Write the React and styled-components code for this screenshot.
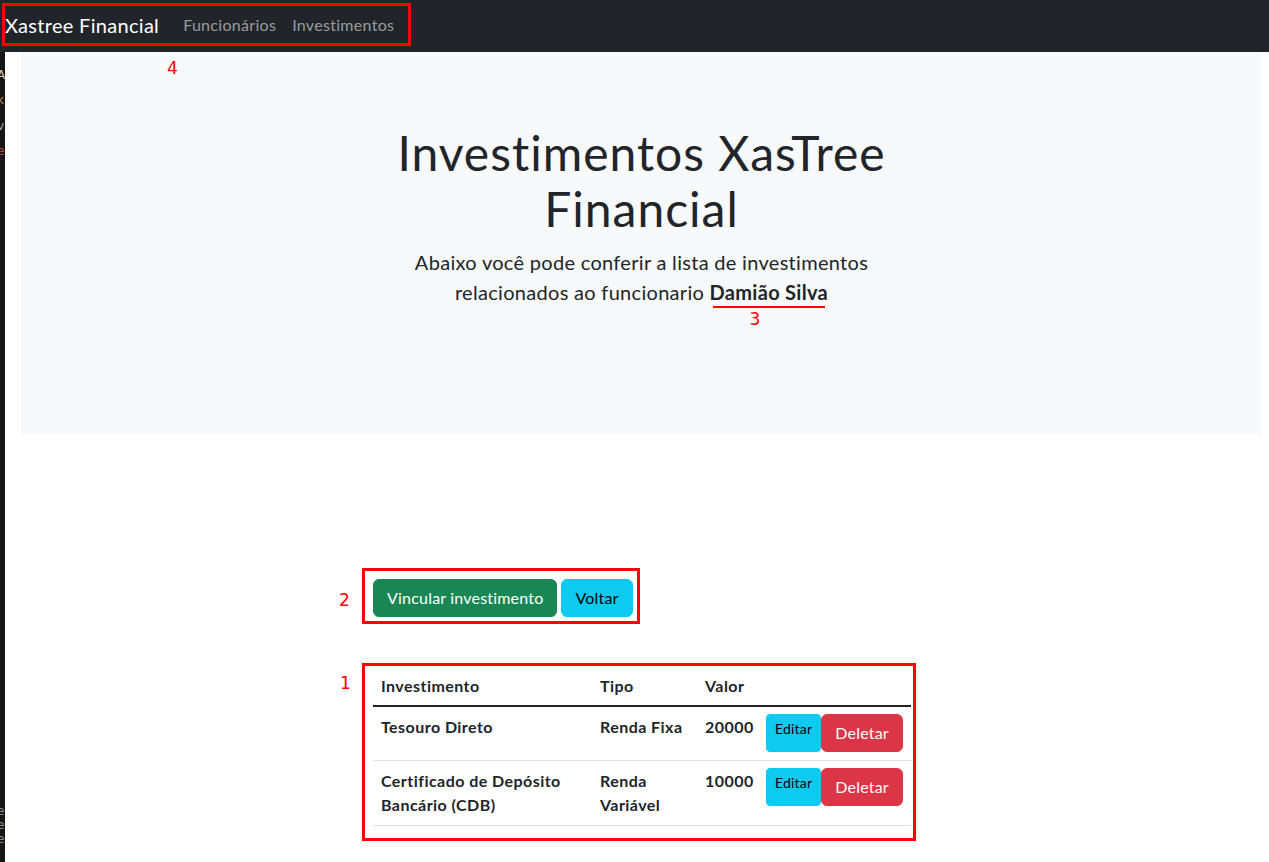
import styled, { createGlobalStyle } from 'styled-components';

const GlobalStyle = createGlobalStyle`
    * {
        box-sizing: border-box;
    }
    body {
        margin: 0;
        background: #ffffff;
        color: #212529;
        font-family: Lato, "Noto Sans", sans-serif;
        font-size: 16px;
        letter-spacing: 0.3px;
    }
`;

const Page = styled.div`
    width: 1269px;
    height: 862px;
    display: flex;
    flex-direction: column;
    overflow: hidden;
`;

const Navbar = styled.nav`
    height: 52px;
    flex-shrink: 0;
    background: #212529;
    display: flex;
    align-items: flex-start;
    padding: 3px 0 0 2px;
`;

const Annotated = styled.div`
    position: relative;
    display: ${(p) => (p.$block ? 'block' : 'inline-flex')};
    align-items: center;
    border: 3px solid #ff0000;
`;

const NavBox = styled(Annotated)`
    height: 43px;
    padding: 0 6px 0 0;
`;

const Brand = styled.span`
    color: #ffffff;
    font-size: 20px;
    margin-right: 16px;
`;

const NavLink = styled.span`
    color: rgba(255, 255, 255, 0.55);
    font-size: 16px;
    padding: 0 8px;
`;

const Marker = styled.span`
    position: absolute;
    top: ${(p) => p.$top};
    left: ${(p) => p.$left};
    color: #ff0000;
    font-family: "DejaVu Sans", sans-serif;
    font-size: 17px;
    font-weight: 400;
    line-height: 22px;
    letter-spacing: 0;
`;

const Body = styled.div`
    flex: 1;
    display: flex;
`;

const Strip = styled.div`
    width: 5px;
    flex-shrink: 0;
    background: #161616;
    overflow: hidden;
    display: flex;
    flex-direction: column;
    font-family: "DejaVu Sans", sans-serif;
    font-size: 12px;
    line-height: 14px;
`;

const Snip = styled.span`
    display: block;
    margin-top: ${(p) => p.$gap};
    margin-left: -3px;
    color: ${(p) => p.$color};
`;

const Main = styled.main`
    flex: 1;
    display: flex;
    flex-direction: column;
`;

const Hero = styled.section`
    height: 383px;
    margin: 0 7px 0 16px;
    background: #f8f9fa;
    padding-top: 73px;
    display: flex;
    justify-content: center;
`;

const HeroInner = styled.div`
    width: 560px;
    text-align: center;
`;

const Title = styled.h1`
    margin: 0;
    font-size: 48px;
    font-weight: 400;
    line-height: 56px;
    letter-spacing: 1px;
`;

const Lead = styled.p`
    margin: 10px 0 0;
    font-size: 20px;
    line-height: 30px;
`;

const Name = styled.strong`
    position: relative;
    font-weight: 700;
`;

const Underline = styled.span`
    position: absolute;
    left: 3px;
    right: 3px;
    bottom: -4px;
    height: 2px;
    background: #ff0000;
`;

const Column = styled.div`
    margin: 133px 0 0 357px;
    display: flex;
    flex-direction: column;
    align-items: flex-start;
`;

const ButtonBox = styled(Annotated)`
    padding: 8px 4px 4px 8px;
    gap: 4px;
`;

const Button = styled.button`
    font-family: inherit;
    letter-spacing: 0.2px;
    font-size: ${(p) => (p.$small ? '14px' : '16px')};
    line-height: ${(p) => (p.$small ? '21px' : '24px')};
    padding: ${(p) => (p.$small ? '3px 8px 4px' : '6px 13px 6px')};
    border: 1px solid ${(p) => p.$bg};
    border-radius: ${(p) => (p.$small ? '4px' : '6px')};
    background: ${(p) => p.$bg};
    color: ${(p) => p.$fg};
    align-self: stretch;
    display: flex;
    align-items: flex-start;
    cursor: pointer;
`;

const TableBox = styled(Annotated)`
    display: block;
    margin-top: 39px;
    padding: 0 2px 12px 8px;
`;

const Table = styled.table`
    width: 538px;
    table-layout: fixed;
    border-collapse: collapse;
    font-size: 16px;
    line-height: 24px;
    letter-spacing: 0.45px;
`;

const Th = styled.th`
    width: ${(p) => p.$w};
    text-align: left;
    font-weight: 700;
    padding: 8px 8px 7px;
    border-bottom: 2px solid #212529;
`;

const Td = styled.td`
    vertical-align: top;
    font-weight: 700;
    padding: 8px 8px 8px;
    border-bottom: 1px solid #dee2e6;
`;

const Actions = styled.div`
    display: flex;
    align-items: stretch;
    margin-top: -1px;
`;

const rows = [
    { name: 'Tesouro Direto', tipo: 'Renda Fixa', valor: 20000 },
    { name: 'Certificado de Depósito Bancário (CDB)', tipo: 'Renda Variável', valor: 10000 },
];

function App() {
    return (
        <Page>
            <GlobalStyle />
            <Navbar>
                <NavBox>
                    <Brand>Xastree Financial</Brand>
                    <NavLink>Funcionários</NavLink>
                    <NavLink>Investimentos</NavLink>
                    <Marker $top="51px" $left="162px">4</Marker>
                </NavBox>
            </Navbar>
            <Body>
                <Strip>
                    <Snip $gap="16px" $color="#d8cbb8">A</Snip>
                    <Snip $gap="11px" $color="#c08a50">k</Snip>
                    <Snip $gap="12px" $color="#9aa4b8">v</Snip>
                    <Snip $gap="11px" $color="#b04a3a">e</Snip>
                    <Snip $gap="646px" $color="#8c8c8c">e</Snip>
                    <Snip $gap="0px" $color="#8c8c8c">e</Snip>
                    <Snip $gap="0px" $color="#8c8c8c">e</Snip>
                </Strip>
                <Main>
                    <Hero>
                        <HeroInner>
                            <Title>Investimentos XasTree Financial</Title>
                            <Lead>
                                Abaixo você pode conferir a lista de investimentos relacionados ao funcionario{' '}
                                <Name>
                                    Damião Silva
                                    <Underline />
                                    <Marker $top="28px" $left="40px">3</Marker>
                                </Name>
                            </Lead>
                        </HeroInner>
                    </Hero>
                    <Column>
                        <ButtonBox>
                            <Button $bg="#198754" $fg="#ffffff">Vincular investimento</Button>
                            <Button $bg="#0dcaf0" $fg="#000000">Voltar</Button>
                            <Marker $top="18px" $left="-26px">2</Marker>
                        </ButtonBox>
                        <TableBox>
                            <Table>
                                <thead>
                                    <tr>
                                        <Th $w="219px">Investimento</Th>
                                        <Th $w="105px">Tipo</Th>
                                        <Th $w="61px">Valor</Th>
                                        <Th $w="153px"></Th>
                                    </tr>
                                </thead>
                                <tbody>
                                    {rows.map((row) => (
                                        <tr key={row.name}>
                                            <Td>{row.name}</Td>
                                            <Td>{row.tipo}</Td>
                                            <Td>{row.valor}</Td>
                                            <Td>
                                                <Actions>
                                                    <Button $small $bg="#0dcaf0" $fg="#000000">Editar</Button>
                                                    <Button $bg="#dc3545" $fg="#ffffff">Deletar</Button>
                                                </Actions>
                                            </Td>
                                        </tr>
                                    ))}
                                </tbody>
                            </Table>
                            <Marker $top="6px" $left="-25px">1</Marker>
                        </TableBox>
                    </Column>
                </Main>
            </Body>
        </Page>
    );
}

export default App;
